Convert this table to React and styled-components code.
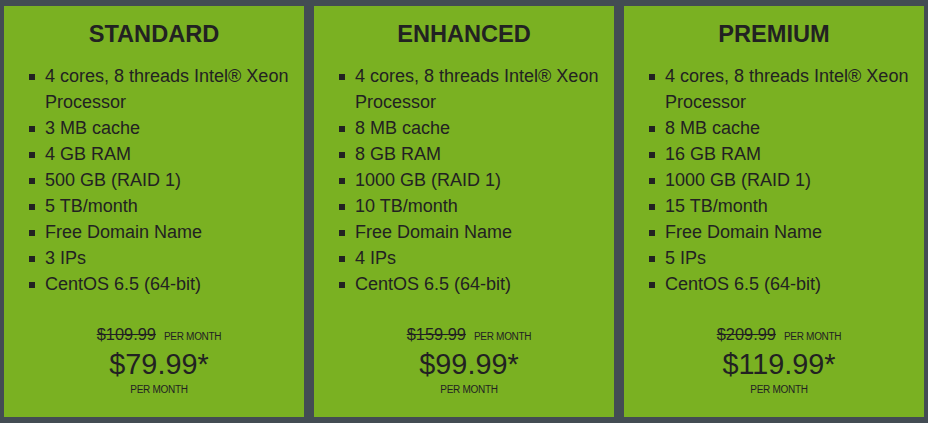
import styled, { createGlobalStyle } from "styled-components";

const GlobalStyle = createGlobalStyle`
  html, body {
    margin: 0;
    padding: 0;
    background: #434c53;
  }
  body {
    font-family: "Liberation Sans", Arial, sans-serif;
    color: #222;
  }
`;

const Plans = styled.div`
  display: grid;
  grid-template-columns: repeat(3, 300px);
  gap: 10px;
  padding: 6px 4px;
  height: 100vh;
  box-sizing: border-box;
`;

const Card = styled.section`
  background: #7ab122;
  display: flex;
  flex-direction: column;
  padding: 13px 0 21px;
  box-sizing: border-box;
`;

const Title = styled.h2`
  margin: 0;
  font-size: 23.6px;
  line-height: 30px;
  font-weight: 700;
  text-align: center;
  color: #222;
`;

const Features = styled.ul`
  list-style: none;
  margin: 14px 0 0;
  padding: 0 10px 0 25px;
`;

const Feature = styled.li`
  display: flex;
  gap: 10px;
  font-size: 18px;
  line-height: 26px;
`;

const Bullet = styled.span`
  flex: none;
  width: 6px;
  height: 6px;
  margin-top: 11px;
  background: #222;
`;

const Price = styled.div`
  margin-top: auto;
  padding-left: 10px;
  display: flex;
  flex-direction: column;
  align-items: center;
`;

const OldRow = styled.div`
  display: flex;
  align-items: baseline;
  gap: 8px;
  line-height: 18px;
`;

const OldPrice = styled.s`
  font-size: 16.4px;
`;

const Period = styled.span`
  font-size: 10px;
  line-height: 12px;
  letter-spacing: -0.3px;
  text-transform: uppercase;
`;

const NewPrice = styled.div`
  font-size: 28.8px;
  line-height: 32px;
  margin: 5px 0 4px;
`;

const plans = [
  {
    name: "STANDARD",
    features: ["3 MB cache", "4 GB RAM", "500 GB (RAID 1)", "5 TB/month", "Free Domain Name", "3 IPs"],
    old: "$109.99",
    price: "$79.99*",
  },
  {
    name: "ENHANCED",
    features: ["8 MB cache", "8 GB RAM", "1000 GB (RAID 1)", "10 TB/month", "Free Domain Name", "4 IPs"],
    old: "$159.99",
    price: "$99.99*",
  },
  {
    name: "PREMIUM",
    features: ["8 MB cache", "16 GB RAM", "1000 GB (RAID 1)", "15 TB/month", "Free Domain Name", "5 IPs"],
    old: "$209.99",
    price: "$119.99*",
  },
];

export default function App() {
  return (
    <>
      <GlobalStyle />
      <Plans>
        {plans.map((plan) => {
          const items = [
            "4 cores, 8 threads Intel® Xeon Processor",
            ...plan.features,
            "CentOS 6.5 (64-bit)",
          ];
          return (
            <Card key={plan.name}>
              <Title>{plan.name}</Title>
              <Features>
                {items.map((item) => (
                  <Feature key={item}>
                    <Bullet />
                    <span>{item}</span>
                  </Feature>
                ))}
              </Features>
              <Price>
                <OldRow>
                  <OldPrice>{plan.old}</OldPrice>
                  <Period>Per month</Period>
                </OldRow>
                <NewPrice>{plan.price}</NewPrice>
                <Period>Per month</Period>
              </Price>
            </Card>
          );
        })}
      </Plans>
    </>
  );
}
